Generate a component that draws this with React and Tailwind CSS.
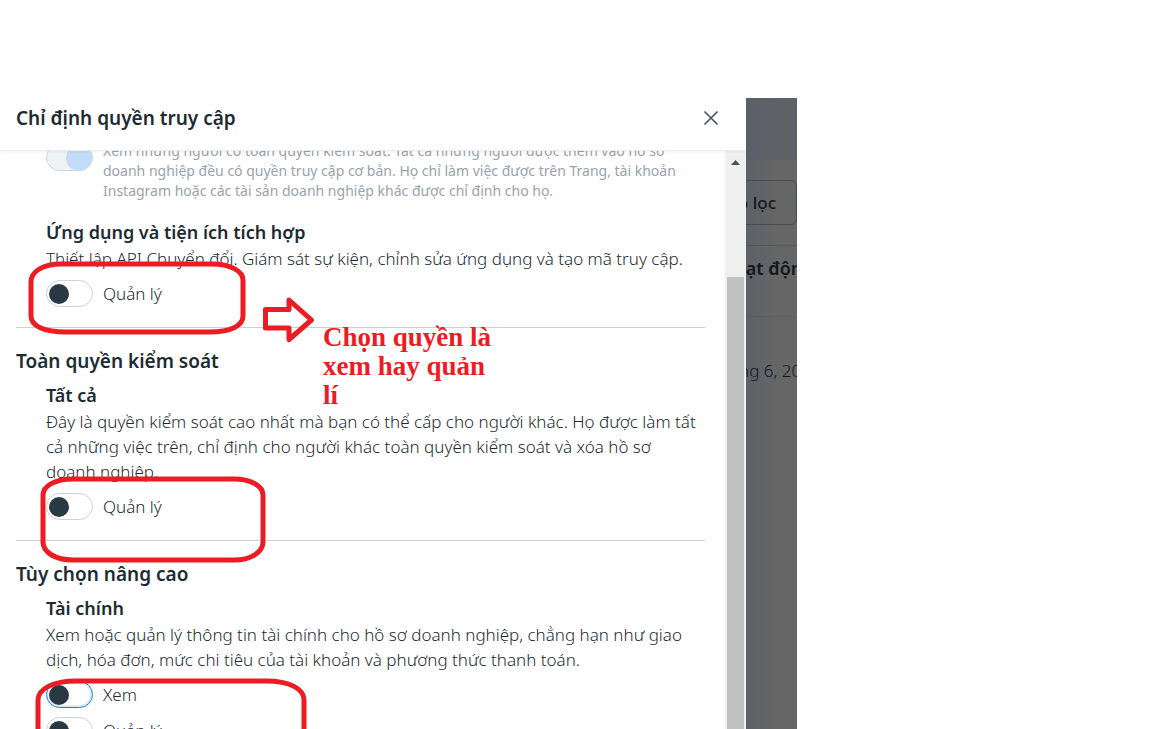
import React, { useState } from 'react'
import clsx from 'clsx'

const SECTIONS = [
  {
    id: 'apps',
    title: 'Ứng dụng và tiện ích tích hợp',
    lines: ['Thiết lập API Chuyển đổi. Giám sát sự kiện, chỉnh sửa ứng dụng và tạo mã truy cập.'],
    options: [{ id: 'apps-manage', label: 'Quản lý' }],
  },
  {
    id: 'full',
    group: 'Toàn quyền kiểm soát',
    title: 'Tất cả',
    lines: [
      'Đây là quyền kiểm soát cao nhất mà bạn có thể cấp cho người khác. Họ được làm tất',
      'cả những việc trên, chỉ định cho người khác toàn quyền kiểm soát và xóa hồ sơ',
      'doanh nghiệp.',
    ],
    options: [{ id: 'full-manage', label: 'Quản lý' }],
  },
  {
    id: 'finance',
    group: 'Tùy chọn nâng cao',
    title: 'Tài chính',
    lines: [
      'Xem hoặc quản lý thông tin tài chính cho hồ sơ doanh nghiệp, chẳng hạn như giao',
      'dịch, hóa đơn, mức chi tiêu của tài khoản và phương thức thanh toán.',
    ],
    options: [
      { id: 'finance-view', label: 'Xem', highlighted: true },
      { id: 'finance-manage', label: 'Quản lý' },
    ],
  },
]

function Lines({ lines }) {
  return lines.map((line, i) => (
    <React.Fragment key={line}>
      {i > 0 && <br />}
      {line}
    </React.Fragment>
  ))
}

function Switch({ id, checked, onChange, highlighted }) {
  return (
    <input
      id={id}
      type="checkbox"
      role="switch"
      checked={checked}
      onChange={(e) => onChange(e.target.checked)}
      className={clsx(
        'flex h-[27px] w-[47px] shrink-0 appearance-none items-center rounded-full border bg-white px-0.5 before:size-5 before:rounded-full before:bg-[#283943] checked:justify-end checked:before:bg-[#1877f2]',
        highlighted ? 'border-[#1b7fc4] inset-ring-2 inset-ring-[#dcebf8]' : 'border-[#cbd2dc]'
      )}
    />
  )
}

function Section({ section, values, onChange }) {
  return (
    <section className="border-b border-[#c8d0d9] pb-5">
      {section.group && <h2 className="mb-2.5 pt-[21px] text-[19px] leading-6 font-semibold">{section.group}</h2>}
      <div className="pl-[30px]">
        <h3 className="mb-0.5 text-lg leading-6 font-semibold">{section.title}</h3>
        <p className="text-[17px] leading-[25px] font-light whitespace-nowrap">
          <Lines lines={section.lines} />
        </p>
        <div className="mt-[9px] flex flex-col gap-[9px]">
          {section.options.map((o) => (
            <div key={o.id} className="flex items-center gap-2.5">
              <Switch
                id={o.id}
                highlighted={o.highlighted}
                checked={!!values[o.id]}
                onChange={(v) => onChange(o.id, v)}
              />
              <label htmlFor={o.id} className="text-[17px] leading-[27px] font-light">{o.label}</label>
            </div>
          ))}
        </div>
      </div>
    </section>
  )
}

// Hand-drawn marks over the dialog
function Annotations() {
  return (
    <div className="pointer-events-none absolute inset-0 overflow-hidden">
      <svg
        className="absolute top-0 left-0"
        width="340"
        height="640"
        fill="none"
        stroke="#ed1c24"
        strokeWidth="5"
        strokeLinejoin="round"
      >
        <path d="M61 166H212C230 166 243 173 243 182V218C243 228 230 234 210 234H66C44 234 31 228 31 218V184C31 174 42 166 61 166Z" />
        <path d="M73 381H234C251 381 263 388 263 397V444C263 454 251 462 234 462H73C55 462 43 454 43 444V397C43 388 55 381 73 381Z" />
        <path d="M38 640V602C38 591 53 583 76 583H266C290 583 304 591 304 602V640" />
        <path d="M265.500 211.500H289V202L311.500 222L289 241.500V230H265.500Z" />
      </svg>
      <p className="absolute top-[225px] left-[323px] font-['Liberation_Serif',serif] text-[27px] leading-[29px] font-bold whitespace-nowrap text-[#ed1c24]">
        Chọn quyền là
        <br />
        xem hay quản
        <br />
        lí
      </p>
    </div>
  )
}

function Backdrop() {
  return (
    <div className="w-[51px] shrink-0 overflow-hidden bg-linear-to-r from-[#5c6168] to-[#666] to-60% whitespace-nowrap text-[#12181d]">
      <div className="h-[62px] bg-linear-to-r from-[#5a5f6b] to-[#606166] to-60%" />
      <div className="flex justify-end border-b border-[#50555a] py-5">
        <button type="button" className="h-[45px] shrink-0 rounded-r-md border border-[#434b54] px-5 text-[17px] font-medium">
          Bộ lọc
        </button>
      </div>
      <div className="-ml-[25px] border-b border-[#5b5d60] pt-2 pb-[34px] text-lg leading-7 font-semibold">Hoạt động</div>
      <div className="-ml-8 pt-10 text-[17px] leading-7 font-light">tháng 6, 2023</div>
    </div>
  )
}

function App() {
  const [values, setValues] = useState({})

  const handleChange = (id, value) => {
    setValues((prev) => ({ ...prev, [id]: value }))
  }

  return (
    <div className="flex h-screen overflow-hidden bg-white pt-[98px] pr-[355px] font-['Noto_Sans',sans-serif] text-[#1c2b33]">
      <div role="dialog" aria-labelledby="dialog-title" className="relative flex min-w-0 flex-1 flex-col bg-white">
        <header className="z-10 flex h-[53px] shrink-0 items-center justify-between border-b border-[#ececee] bg-white pr-6 pb-3 pl-4 shadow-[0_1px_3px_rgba(0,0,0,0.06)]">
          <h1 id="dialog-title" className="text-[19px] leading-7 font-semibold">Chỉ định quyền truy cập</h1>
          <button type="button" aria-label="Đóng" className="flex size-[22px] items-center justify-center">
            <svg width="16" height="16" viewBox="0 0 16 16" fill="none" stroke="#44515a" strokeWidth="1.600">
              <path d="M1.500 1.500L14.500 14.500M14.500 1.500L1.500 14.500" />
            </svg>
          </button>
        </header>

        <div className="flex min-h-0 flex-1 overflow-hidden">
          <div className="-mt-2.5 min-w-0 flex-1 pr-5 pl-4">
            <div className="mb-[19px] flex gap-2.5 pl-[30px] text-[#98a3ac]">
              <input
                id="basic-view"
                type="checkbox"
                role="switch"
                checked
                disabled
                className="mt-[3px] flex h-[27px] w-[47px] shrink-0 appearance-none justify-end rounded-full border border-[#cfd6dd] bg-[#eff3f6] before:size-[26px] before:rounded-full before:bg-[#c2dbf6]"
              />
              <label htmlFor="basic-view" className="text-sm leading-5 whitespace-nowrap">
                <Lines
                  lines={[
                    'Xem những người có toàn quyền kiểm soát. Tất cả những người được thêm vào hồ sơ',
                    'doanh nghiệp đều có quyền truy cập cơ bản. Họ chỉ làm việc được trên Trang, tài khoản',
                    'Instagram hoặc các tài sản doanh nghiệp khác được chỉ định cho họ.',
                  ]}
                />
              </label>
            </div>
            {SECTIONS.map((s) => (
              <Section key={s.id} section={s} values={values} onChange={handleChange} />
            ))}
          </div>
          <div className="flex w-[21px] shrink-0 flex-col gap-[111px] bg-[#f0f0f0] px-0.5 pt-2">
            <svg className="mx-auto shrink-0" width="9" height="7" viewBox="0 0 9 7" fill="#505050">
              <path d="M0 6L4.500 1L9 6Z" />
            </svg>
            <div className="flex-1 bg-[#c1c1c1]" />
          </div>
        </div>
        <Annotations />
      </div>
      <Backdrop />
    </div>
  )
}

export default App
